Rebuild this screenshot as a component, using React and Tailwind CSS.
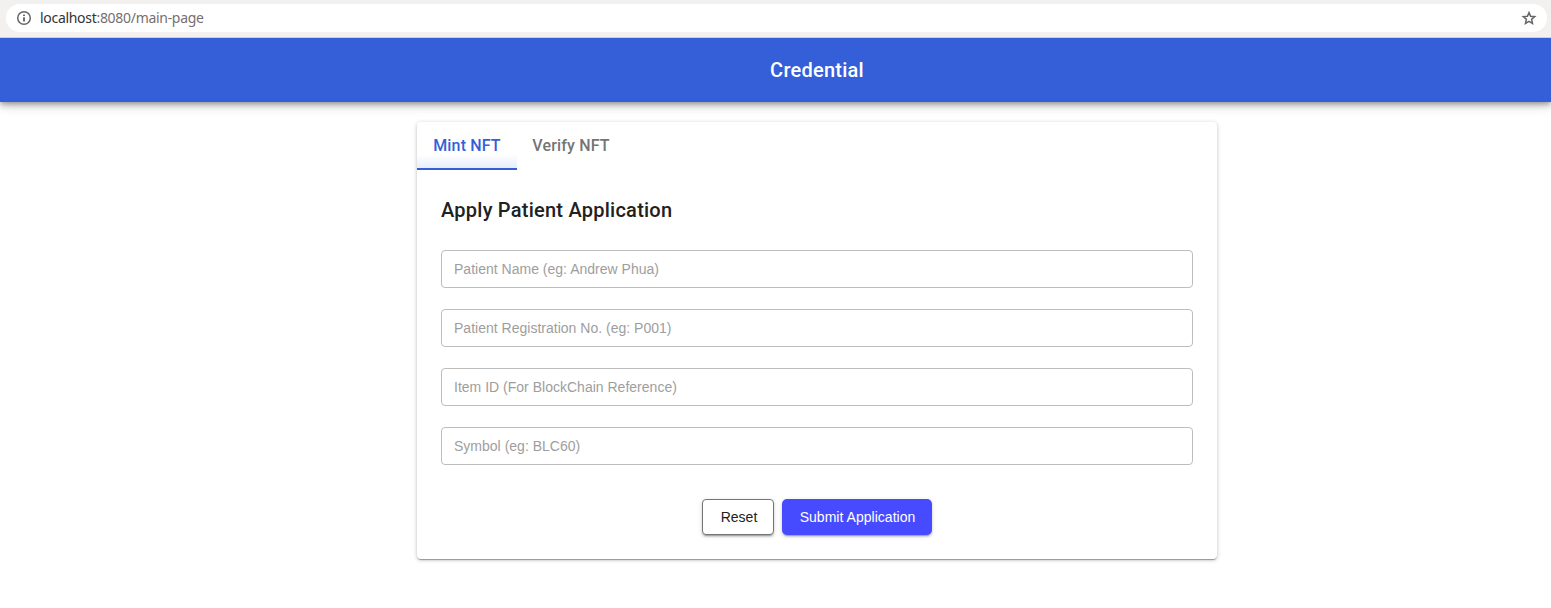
import React from "react";

const fields = [
  "Patient Name (eg: Andrew Phua)",
  "Patient Registration No. (eg: P001)",
  "Item ID (For BlockChain Reference)",
  "Symbol (eg: BLC60)",
];

function AddressBar() {
  return (
    <div className="relative z-10 flex h-[38px] items-start border-b border-[#cfcfd2] bg-[#f2f1f0] pt-1 pr-1 pl-1.5">
      <div className="flex h-7 flex-1 items-center rounded-full bg-white pr-[10px] pl-[10px]">
        <svg className="size-4 shrink-0" viewBox="0 0 16 16" fill="none">
          <circle cx="8" cy="8" r="6.3" stroke="#666666" strokeWidth="1.5" />
          <path d="M8 7.2v4.3M8 4.4v1.7" stroke="#5f5f5f" strokeWidth="1.8" />
        </svg>
        <div className="ml-2 flex-1 font-['Noto_Sans',sans-serif] text-[14px] leading-5 tracking-[-0.3px] whitespace-nowrap text-[#757070]">
          <span className="text-[#333333]">localhost</span>:8080/main-page
        </div>
        <svg className="size-4 shrink-0" viewBox="0 0 16 16" fill="none">
          <path
            d="M8 2.6l1.6 3.7 4.1.36-3.1 2.7.93 4L8 11.3l-3.53 2.06.93-4-3.1-2.7 4.1-.36z"
            stroke="#666666"
            strokeWidth="1.5"
          />
        </svg>
      </div>
    </div>
  );
}

export default function App() {
  return (
    <div className="h-[608px] overflow-hidden bg-white font-[Roboto,sans-serif]">
      <AddressBar />
      <header className="flex h-16 items-center justify-center bg-[#355fd8] pl-[83px] shadow-[0_2px_4px_-1px_rgba(0,0,0,0.2),0_4px_5px_0_rgba(0,0,0,0.14),0_2px_12px_0_rgba(0,0,0,0.22)]">
        <h1 className="text-xl leading-8 font-medium tracking-[0.24px] text-white">Credential</h1>
      </header>
      <main className="flex pt-5 pl-[417px]">
        <section className="h-[437px] w-[800px] rounded bg-white shadow-[0_2px_1px_-1px_rgba(0,0,0,0.2),0_1px_1px_0_rgba(0,0,0,0.14),0_1px_4px_0_rgba(0,0,0,0.24)]">
          <nav className="flex h-12 text-base font-medium tracking-[0.15px]">
            <button className="h-12 w-[100px] rounded-tl border-b-2 border-[#355fd8] bg-[linear-gradient(to_top,#e8eefb,#ffffff_14px)] pt-px text-[#355fd8]">
              Mint NFT
            </button>
            <button className="h-12 w-[108px] pb-px text-[#757575]">Verify NFT</button>
          </nav>
          <div className="px-6 pt-6">
            <h2 className="text-xl leading-8 font-medium tracking-[0.24px] text-[#212121]">
              Apply Patient Application
            </h2>
            <form className="mt-6 flex flex-col gap-[21px] font-['Liberation_Sans',sans-serif] text-sm tracking-[0.01px]">
              {fields.map((label) => (
                <input
                  key={label}
                  placeholder={label}
                  className="h-[38px] w-full rounded border border-[#bdbdbd] px-3 placeholder:text-[#9e9e9e]"
                />
              ))}
              <div className="mt-[13px] flex justify-center gap-2">
                <button
                  type="reset"
                  className="h-9 w-[72px] rounded border border-[#757575] bg-white pl-0.5 text-[#212121] shadow-[0_3px_1px_-2px_rgba(0,0,0,0.2),0_2px_2px_0_rgba(0,0,0,0.14),0_1px_5px_0_rgba(0,0,0,0.12)]"
                >
                  Reset
                </button>
                <button
                  type="button"
                  className="h-9 w-[150px] rounded-[5px] bg-[#474bff] pl-px tracking-[0.03px] text-white shadow-[0_3px_1px_-2px_rgba(0,0,0,0.2),0_2px_2px_0_rgba(0,0,0,0.14),0_1px_5px_0_rgba(0,0,0,0.12)]"
                >
                  Submit Application
                </button>
              </div>
            </form>
          </div>
        </section>
      </main>
    </div>
  );
}
